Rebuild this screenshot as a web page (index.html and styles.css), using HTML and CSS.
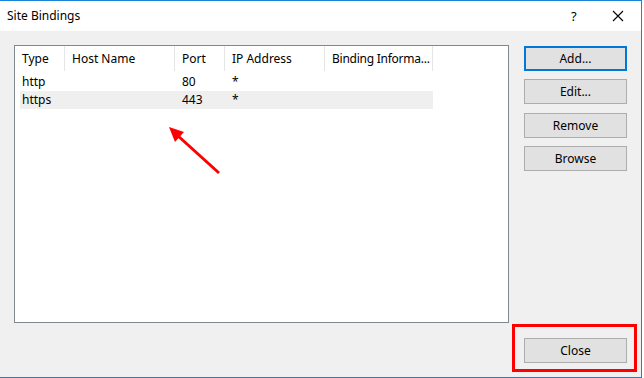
FILE: index.html
```html
<!DOCTYPE html>
<html lang="en">
<head>
  <meta charset="UTF-8" />
  <title>Site Bindings</title>
  <link rel="stylesheet" href="styles.css">
</head>
<body>
  <div class="window">
    <div class="titlebar">
      <span class="title">Site Bindings</span>
      <span class="help">?</span>
      <span class="close-x">
        <svg width="12" height="12" viewBox="0 0 12 12"><path d="M1 1L11 11M11 1L1 11" stroke="#000" stroke-width="1.1" fill="none"/></svg>
      </span>
    </div>

    <div class="content">
      <div class="main">
        <div class="listbox">
          <div class="head">
            <div class="hcell">Type</div>
            <div class="hcell">Host Name</div>
            <div class="hcell">Port</div>
            <div class="hcell">IP Address</div>
            <div class="hcell tight">Binding Informa...</div>
          </div>
          <div class="row">
            <div class="cell first">http</div>
            <div class="cell"></div>
            <div class="cell">80</div>
            <div class="cell">*</div>
            <div class="cell"></div>
          </div>
          <div class="row selected">
            <div class="cell first">https</div>
            <div class="cell"></div>
            <div class="cell">443</div>
            <div class="cell">*</div>
            <div class="cell"></div>
          </div>
        </div>

        <div class="actions">
          <button class="btn default">Add...</button>
          <button class="btn">Edit...</button>
          <button class="btn gap-fix">Remove</button>
          <button class="btn">Browse</button>
        </div>
      </div>

      <div class="footer">
        <button class="btn">Close</button>
      </div>
    </div>

    <!-- annotations drawn on top of the dialog -->
    <svg class="arrow" width="644" height="378" viewBox="0 0 644 378">
      <line x1="219" y1="173" x2="177" y2="135" stroke="#ff0000" stroke-width="3" />
      <polygon points="169,127 184,132 175,142" fill="#ff0000" />
    </svg>
    <div class="highlight"></div>
  </div>
</body>
</html>
```

FILE: styles.css
```css
body {
  margin: 0;
  background: #ffffff;
  font-family: 'Noto Sans', 'Liberation Sans', sans-serif;
  font-size: 12px;
  color: #000;
}

.window {
  position: relative;
  width: 641px;
  height: 376px;
  background: #f0f0f0;
  border-top: 1px solid #1883d7;
  border-right: 1px solid #1883d7;
  border-bottom: 1px solid #1883d7;
}

.titlebar {
  height: 30px;
  background: #fff;
  display: flex;
  align-items: center;
  padding-left: 7px;
}

.title {
  flex: 1;
  font-size: 12px;
  margin-top: -1px;
}

.help {
  width: 10px;
  font-size: 13px;
  margin-right: 31px;
}

.close-x {
  width: 12px;
  height: 12px;
  margin-right: 17px;
  display: flex;
}

.content {
  padding: 14px 0 0 14px;
}

.main {
  display: flex;
  gap: 15px;
}

.listbox {
  width: 493px;
  height: 276px;
  background: #fff;
  border: 1px solid #828790;
}

.head {
  display: grid;
  grid-template-columns: 50px 110px 50px 100px 108px;
  height: 25px;
}

.hcell {
  border-right: 1px solid #e5e5e5;
  padding-left: 7px;
  line-height: 25px;
  white-space: nowrap;
  overflow: hidden;
}

.hcell.tight {
  letter-spacing: -0.25px;
}

.row {
  display: grid;
  grid-template-columns: 45px 110px 50px 100px 108px;
  margin-left: 5px;
  width: 413px;
  height: 18px;
  line-height: 18px;
}

.head + .row {
  margin-top: 2px;
}

.cell {
  padding-left: 7px;
}

.cell.first {
  padding-left: 2px;
}

.row.selected {
  background: #efefef;
}

.actions {
  display: flex;
  flex-direction: column;
  gap: 8px;
  padding-top: 1px;
}

.btn {
  width: 103px;
  height: 25px;
  background: #e1e1e1;
  border: 1px solid #adadad;
  font-family: inherit;
  font-size: 12px;
  color: #000;
  padding: 0;
}

.btn.default {
  border: 2px solid #0078d7;
}

.btn.gap-fix {
  margin-top: 1px;
}

.footer {
  display: flex;
  justify-content: flex-end;
  padding: 15px 14px 0 0;
}

.arrow {
  position: absolute;
  left: 0;
  top: -1px;
  pointer-events: none;
}

.highlight {
  position: absolute;
  left: 512px;
  top: 323px;
  width: 119px;
  height: 42px;
  border: 3px solid #ff0000;
}
```
